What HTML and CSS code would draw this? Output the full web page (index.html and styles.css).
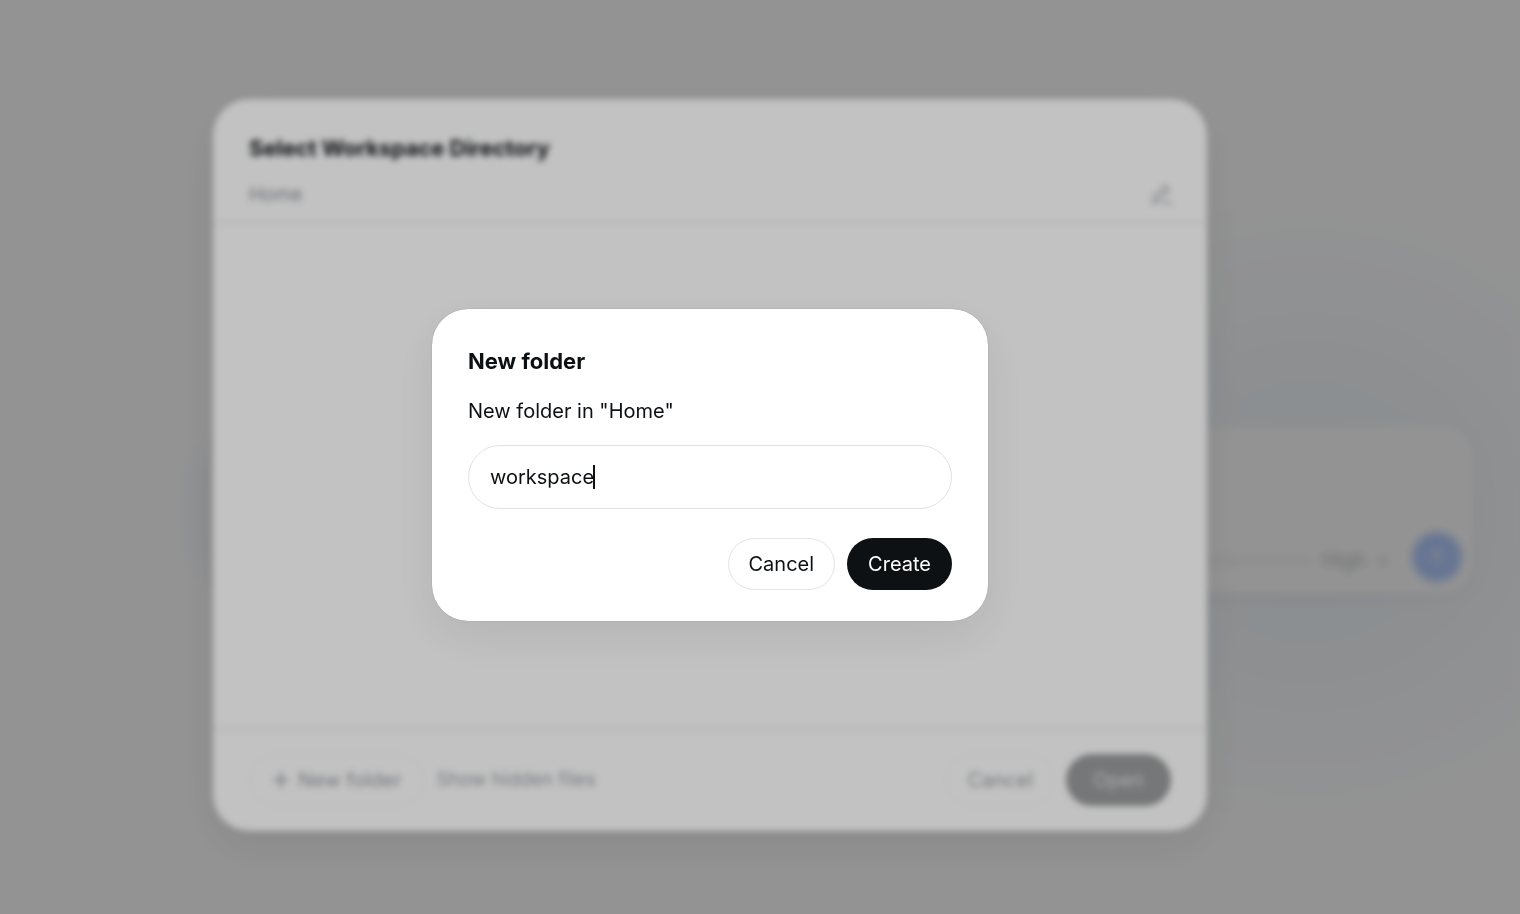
FILE: index.html
```html
<!DOCTYPE html>
<html lang="en">
<head>
<meta charset="utf-8">
<meta name="viewport" content="width=device-width, initial-scale=1">
<title>New folder</title>
<link rel="stylesheet" href="styles.css">
</head>
<body>
<main class="page">
  <section class="composer" aria-label="Message">
    <div class="composer-bar">
      <span class="composer-track"></span>
      <button class="level" type="button">High
        <svg width="14" height="14" viewBox="0 0 14 14" fill="none" stroke="currentColor" stroke-width="2" aria-hidden="true"><path d="M2 5l5 5 5-5"/></svg>
      </button>
      <button class="send" type="button" aria-label="Send">
        <svg width="24" height="24" viewBox="0 0 24 24" fill="none" stroke="currentColor" stroke-width="3" stroke-linecap="round" stroke-linejoin="round" aria-hidden="true"><path d="M12 20V5M6 11l6-6 6 6"/></svg>
      </button>
    </div>
  </section>
</main>

<div class="overlay">
  <section class="dialog picker" role="dialog" aria-labelledby="picker-title">
    <header class="picker-header">
      <h1 class="title" id="picker-title">Select Workspace Directory</h1>
      <div class="path">
        <span>Home</span>
        <button class="edit" type="button" aria-label="Edit path">
          <svg width="22" height="22" viewBox="0 0 22 22" fill="none" stroke="currentColor" stroke-width="2" stroke-linecap="round" stroke-linejoin="round" aria-hidden="true"><path d="M2 19l1-6L14 2l4 4L7 17l-5 2zM12 19h9"/></svg>
        </button>
      </div>
    </header>
    <div class="picker-list"></div>
    <footer class="picker-footer">
      <button class="button outline muted" type="button">
        <svg width="18" height="18" viewBox="0 0 18 18" fill="none" stroke="currentColor" stroke-width="2" aria-hidden="true"><path d="M9 1v16M1 9h16"/></svg>
        New folder
      </button>
      <button class="text-button" type="button">Show hidden files</button>
      <span class="spacer"></span>
      <button class="button outline muted cancel" type="button">Cancel</button>
      <button class="button solid dimmed" type="button">Open</button>
    </footer>
  </section>
</div>

<div class="overlay">
  <form class="dialog prompt" role="dialog" aria-labelledby="prompt-title">
    <h2 class="title" id="prompt-title">New folder</h2>
    <label class="prompt-label" for="folder-name">New folder in "Home"</label>
    <div class="field">
      <input class="field-input" id="folder-name" type="text" value="workspace" autocomplete="off" spellcheck="false">
      <span class="caret"></span>
    </div>
    <div class="actions">
      <button class="button outline" type="button">Cancel</button>
      <button class="button solid" type="button">Create</button>
    </div>
  </form>
</div>
</body>
</html>
```

FILE: styles.css
```css
* {
  box-sizing: border-box;
}

body {
  margin: 0;
  min-height: 100vh;
  overflow: hidden;
  background: #fff;
  color: #0d1113;
  font-family: Inter, "Liberation Sans", sans-serif;
  font-size: 20px;
  line-height: 28px;
}

button,
input {
  margin: 0;
  padding: 0;
  border: 0;
  background: none;
  color: inherit;
  font: inherit;
}

.page {
  display: flex;
  align-items: center;
  min-height: 100vh;
  padding: 106px 46px 0 210px;
  background:
    radial-gradient(ellipse 360px 320px at 86% 56%, rgba(220, 232, 244, 0.5), rgba(220, 232, 244, 0) 100%),
    radial-gradient(ellipse 60px 90px at 15% 56%, rgba(222, 234, 250, 0.35), rgba(222, 234, 250, 0) 100%);
}

.composer {
  display: flex;
  flex: 1;
  align-items: flex-end;
  height: 168px;
  padding: 12px;
  border-radius: 32px;
  background: #fff;
  box-shadow: 0 4px 16px rgba(0, 0, 0, 0.06);
}

.composer-bar {
  display: flex;
  flex: 1;
  align-items: center;
  justify-content: flex-end;
}

.composer-track {
  width: 120px;
  height: 8px;
  margin: 8px 8px 0 0;
  background: #f6f6f9;
}

.level {
  display: flex;
  align-items: center;
  gap: 10px;
  margin-right: 22px;
  padding-top: 6px;
  color: #bcbfc2;
}

.send {
  display: grid;
  place-items: center;
  width: 50px;
  height: 50px;
  border-radius: 25px;
  background: #b4ccff;
  color: #dce4f8;
}

.overlay {
  position: fixed;
  inset: 0;
  display: grid;
  place-items: center;
  padding: 16px 100px 0 0;
  background: rgba(0, 0, 0, 0.24);
  backdrop-filter: blur(3px);
}

.dialog {
  border-radius: 36px;
  background: #fff;
  box-shadow: 0 0 1px rgba(0, 0, 0, 0.4), 0 16px 48px rgba(0, 0, 0, 0.08);
}

.title {
  margin: 0;
  font-size: 22px;
  font-weight: 700;
  line-height: 32px;
}

.picker {
  display: flex;
  flex-direction: column;
  width: 994px;
  height: 732px;
}

.picker-header {
  padding: 33px 34px 12px 36px;
  border-bottom: 3px solid #f0f0f0;
}

.path {
  display: flex;
  align-items: center;
  justify-content: space-between;
  margin-top: 17px;
  color: #8e9198;
  font-size: 19px;
}

.edit {
  display: flex;
  color: #b0b3b8;
}

.picker-list {
  flex: 1;
}

.picker-footer {
  display: flex;
  align-items: center;
  gap: 12px;
  padding: 24px 36px 25px;
  border-top: 3px solid #f0f0f0;
}

.button {
  display: flex;
  align-items: center;
  gap: 8px;
  height: 52px;
  padding: 0 20px;
  border: 1px solid transparent;
  border-radius: 26px;
}

.outline {
  border-color: #e4e4e6;
}

.solid {
  background: #0d1113;
  color: #fff;
}

.muted {
  padding: 0 22px;
  border-color: #f6f6f7;
  color: #9b9ea3;
}

.cancel {
  padding: 0 20px;
}

.text-button {
  color: #a0a4aa;
  font-size: 19px;
}

.dimmed {
  padding: 0 26px;
  background: #9c9d9e;
  color: #e0e0e0;
}

.spacer {
  flex: 1;
}

.prompt {
  display: flex;
  flex-direction: column;
  width: 556px;
  padding: 36px 36px 31px;
}

.prompt-label {
  margin-top: 20px;
}

.field {
  display: flex;
  align-items: center;
  height: 64px;
  margin-top: 20px;
  padding: 0 21px;
  border: 1px solid #e2e2e4;
  border-radius: 32px;
}

.field-input {
  field-sizing: content;
  outline: 0;
}

.caret {
  width: 2px;
  height: 24px;
  margin-left: -1px;
  background: #0d1113;
}

.actions {
  display: flex;
  justify-content: flex-end;
  gap: 12px;
  margin-top: 29px;
}
```
